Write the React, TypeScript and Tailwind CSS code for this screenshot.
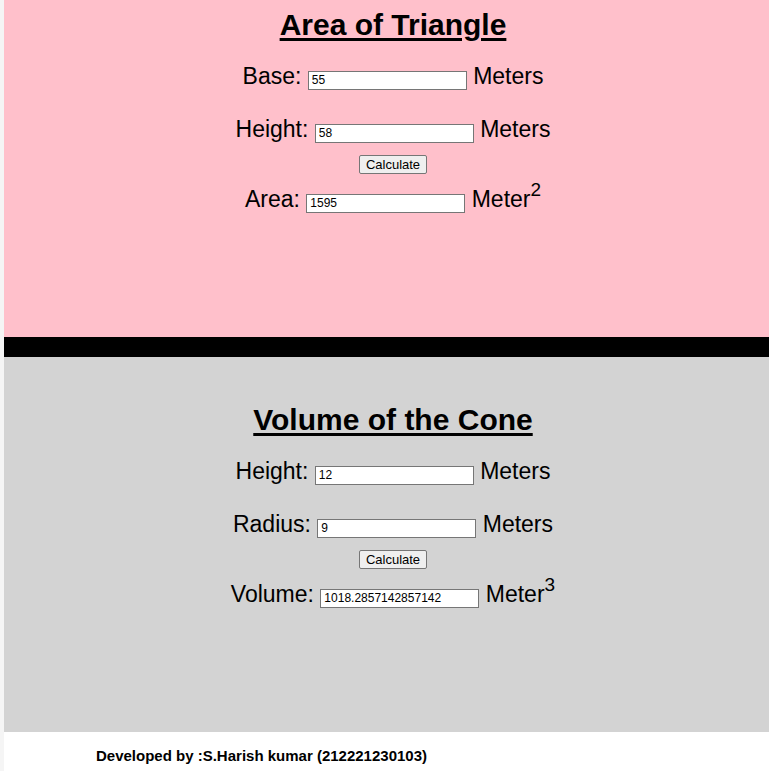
import React from 'react';

const inputCls =
  "inline-block w-[159px] h-[19px] border border-[#767676] bg-white px-[3px] text-[12px] leading-[17px] text-black align-baseline outline-none";

function Row({ label, value, unit, sup, lead }: { label: string; value: string; unit: string; sup?: string; lead: string }) {
  return (
    <div className={lead}>
      {label}: <input className={inputCls} defaultValue={value} readOnly /> {unit}
      {sup && <sup className="relative top-[-11px] text-[19px] leading-none align-baseline">{sup}</sup>}
    </div>
  );
}

function Calc() {
  return (
    <div className="flex h-[19px] justify-center">
      <button className="h-[19px] w-[68px] rounded-[2px] border border-[#767676] bg-[#efefef] text-[13px] leading-[17px] text-black">
        Calculate
      </button>
    </div>
  );
}

export default function App() {
  return (
    <div className="min-h-screen bg-[#f5f5f5] pl-[4px] font-['Liberation_Sans',Arial,sans-serif] text-black">
      {/* triangle */}
      <section className="h-[337px] bg-[#ffc0cb] pl-[13px] text-center text-[23px]">
        <h1 className="h-[49px] text-[30px] font-bold leading-[49px] underline decoration-[3px] underline-offset-[3px]">Area of Triangle</h1>
        <Row label="Base" value="55" unit="Meters" lead="h-[54px] leading-[54px]" />
        <Row label="Height" value="58" unit="Meters" lead="h-[52px] leading-[52px]" />
        <Calc />
        <Row label="Area" value="1595" unit="Meter" sup="2" lead="h-[50px] leading-[50px]" />
      </section>

      <div className="h-[20px] bg-black" />

      {/* cone */}
      <section className="h-[375px] bg-[#d3d3d3] pl-[13px] pt-[38px] text-center text-[23px]">
        <h1 className="h-[49px] text-[30px] font-bold leading-[49px] underline decoration-[3px] underline-offset-[3px]">Volume of the Cone</h1>
        <Row label="Height" value="12" unit="Meters" lead="h-[54px] leading-[54px]" />
        <Row label="Radius" value="9" unit="Meters" lead="h-[52px] leading-[52px]" />
        <Calc />
        <Row label="Volume" value="1018.2857142857142" unit="Meter" sup="3" lead="h-[50px] leading-[50px]" />
      </section>

      <footer className="h-[39px] bg-white pl-[92px] pt-[15px] text-[15px] font-bold leading-[18px]">
        Developed by :S.Harish kumar (212221230103)
      </footer>
    </div>
  );
}
